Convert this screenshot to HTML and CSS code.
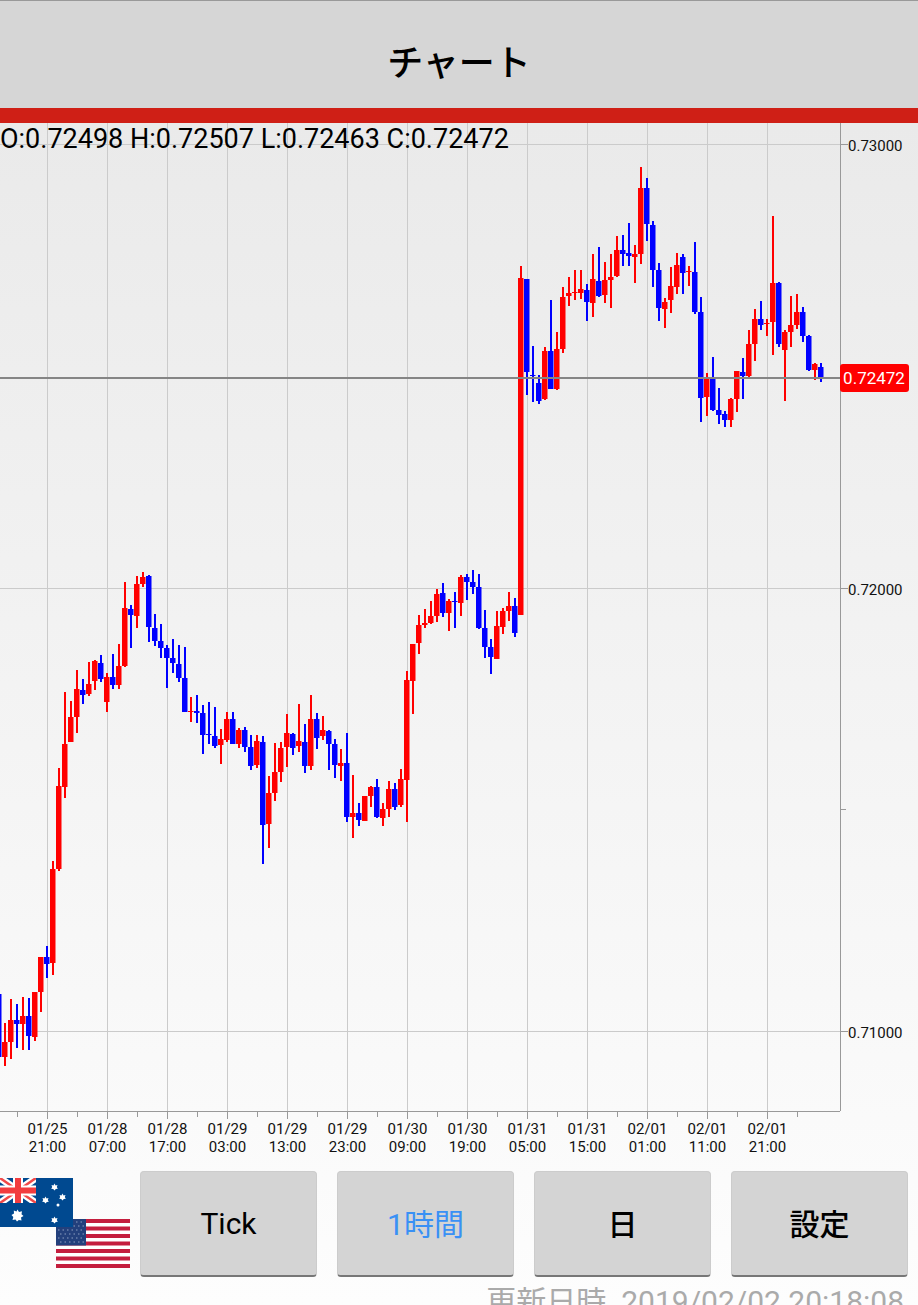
FILE: index.html
```html
<!DOCTYPE html>
<html lang="ja">
<head>
    <meta charset="UTF-8">
    <meta name="viewport" content="width=device-width, initial-scale=1.0">
    <title>チャート</title>
    <link rel="stylesheet" href="styles.css">
</head>
<body>
    <header class="header">
        <h1 class="title">チャート</h1>
    </header>

    <main class="chart">
        <p class="ohlc">O:0.72498 H:0.72507 L:0.72463 C:0.72472</p>
        <svg id="plot" class="plot" viewBox="0 123 918 1037" role="img" aria-label="AUD/USD"></svg>
    </main>

    <nav class="toolbar">
        <svg class="flags" viewBox="0 0 130 90" role="img" aria-label="AUD/USD">
            <!-- USA -->
            <g transform="translate(56 41)">
                <rect width="74" height="49" fill="#fff"/>
                <path d="M0 2H74M0 9.5H74M0 17H74M0 24.5H74M0 32H74M0 39.5H74M0 47H74" stroke="#c41e3e" stroke-width="3.8"/>
                <rect width="30" height="26.5" fill="#23407c"/>
                <path d="M2 3H29M4 7H29M2 11H29M4 15H29M2 19H29M4 23H29" stroke="#8c9dc0" stroke-width="1.2" stroke-dasharray="1.5 3"/>
            </g>
            <!-- Australia -->
            <g>
                <rect width="73" height="49" fill="#004990"/>
                <svg width="36" height="25" viewBox="0 0 36 25">
                    <path d="M0 0L36 25M36 0L0 25" stroke="#fff" stroke-width="7"/>
                    <path d="M0 0L36 25M36 0L0 25" stroke="#f04848" stroke-width="2.5"/>
                    <path d="M18 0V25M0 12.5H36" stroke="#fff" stroke-width="10"/>
                    <path d="M18 0V25M0 12.5H36" stroke="#f23c3f" stroke-width="6"/>
                </svg>
                <g fill="#fff">
                    <path d="M17.500 31.500l1.500 2.500 3-.8-.5 3 2 1.800-2.500 1.500.5 3-2.700-.5-1.800 1.500-1.500-2-3 .5.800-3-1.800-2 2.500-1.500-.2-3 2.700 1z"/>
                    <path id="star" d="M54.500 5.500l1 2 2-.5-.7 2 1 1.700-2 .2-1.300 1.500-1.300-1.500-2-.2 1-1.700-.7-2 2 .5z"/>
                    <use href="#star" x="-9" y="13"/>
                    <use href="#star" x="8" y="10"/>
                    <use href="#star" y="33"/>
                    <circle cx="58" cy="27" r="1.500"/>
                </g>
            </g>
        </svg>
        <button type="button" class="btn">Tick</button>
        <button type="button" class="btn kanji active">1時間</button>
        <button type="button" class="btn kanji">日</button>
        <button type="button" class="btn kanji">設定</button>
    </nav>

    <footer class="updated">更新日時&nbsp; 2019/02/02 20:18:08</footer>

    <script src="chart.js"></script>
</body>
</html>
```

FILE: styles.css
```css
* {
    box-sizing: border-box;
}

body {
    margin: 0;
    height: 100vh;
    overflow: hidden;
    background: linear-gradient(#e8e8e8, #fdfdfd);
    color: #000;
    font-family: Roboto, "Noto Sans CJK JP", sans-serif;
}

.header {
    display: flex;
    align-items: center;
    justify-content: center;
    height: 123px;
    padding-top: 18px;
    background: #d6d6d6;
    border-top: 1px solid #999;
    border-bottom: 15px solid #cf1f16;
}

.title {
    margin: 0;
    font-size: 36px;
    font-weight: 500;
    line-height: 48px;
}

.chart {
    position: relative;
}

/* Quote line lies over the plot */
.ohlc {
    position: absolute;
    top: 0;
    left: 0;
    margin: 0;
    font-size: 27px;
    line-height: 32px;
    white-space: nowrap;
}

.plot {
    display: block;
    width: 100%;
    height: auto;
}

.grid {
    stroke: #cbcbcb;
}

.axis {
    stroke: #999;
}

.price-line {
    stroke: #858585;
    stroke-width: 2;
}

.up {
    fill: #f00;
}

.down {
    fill: #00f;
}

.label {
    fill: #111;
    font-size: 15px;
}

.time {
    text-anchor: middle;
}

.badge {
    fill: #f00;
}

.badge-text {
    fill: #fff;
    font-size: 17px;
    text-anchor: middle;
}

.toolbar {
    display: flex;
    gap: 20px;
    padding: 11px 10px 0 0;
}

.flags {
    flex: none;
    width: 130px;
    height: 90px;
    margin: 7px -10px 0 0;
}

.btn {
    flex: 1;
    height: 106px;
    padding: 0;
    border: 1px solid #ccc;
    border-bottom: 2px solid #777;
    border-radius: 4px;
    background: #d4d4d4;
    color: #000;
    font-family: inherit;
    font-size: 30px;
}

.btn.kanji {
    padding-bottom: 4px;
    font-weight: 500;
}

.btn.active {
    color: #3990f5;
    font-weight: 400;
}

.updated {
    padding: 5px 14px 0 0;
    color: #aaa;
    font-size: 30px;
    line-height: 40px;
    text-align: right;
    white-space: nowrap;
}
```

FILE: chart.js
```javascript
const svg = document.getElementById('plot');

const PLOT_TOP = 123;
const PLOT_BOTTOM = 1111;
const PLOT_RIGHT = 840;
const STEP = 6;

// One candle per hour: direction, high, body top, body bottom, low
const candles = `
D 994 994 1057 1057|U 1023 1042 1057 1066|U 999 1020 1042 1059|D 1004 1020 1024 1048
U 997 1016 1024 1050|D 998 1016 1036 1050|U 992 992 1037 1041|U 957 957 992 1012
D 946 957 964 978|U 861 869 963 975|U 768 786 869 871|U 692 744 787 798
U 701 717 742 742|U 670 689 717 733|D 679 690 695 704|U 662 684 694 696
U 660 661 681 690|D 655 663 679 682|U 673 677 702 712|D 654 677 685 689
U 644 666 685 689|U 582 608 666 667|D 605 609 615 648|U 576 584 616 628
U 572 577 584 587|D 575 576 627 642|D 614 628 641 646|D 624 641 648 658
D 645 648 658 688|D 639 658 663 673|D 645 664 678 682|D 647 678 712 712
U 697 711 712 722|D 695 711 713 723|D 705 713 735 754|D 702 734 735 744
D 707 736 746 748|U 729 739 745 764|U 712 719 740 742|D 712 719 744 744
U 728 730 744 748|D 727 730 747 752|D 735 747 766 770|U 735 741 765 768
D 736 742 825 864|U 776 793 824 848|U 743 772 793 801|U 742 748 772 782
U 714 733 747 767|D 733 734 748 755|U 704 741 746 752|D 724 742 766 773
U 695 719 766 770|D 713 719 738 749|U 716 730 736 740|D 730 731 744 770
D 739 744 765 778|U 749 763 766 781|D 733 763 817 822|U 775 813 817 838
D 803 813 820 826|U 796 796 821 821|U 786 787 796 807|D 779 787 817 818
U 803 809 818 826|U 781 789 809 817|D 783 789 807 810|U 769 779 805 807
U 671 680 780 822|U 644 644 681 714|U 615 625 643 654|U 609 623 625 628
U 601 616 623 624|U 589 594 616 622|D 583 593 613 617|U 599 601 613 631
D 592 601 602 628|U 575 577 603 616|D 574 577 582 600|D 570 582 587 594
D 574 587 628 629|D 610 628 647 658|D 639 647 657 674|U 611 626 659 659
U 608 611 627 634|U 592 606 611 621|D 598 606 633 637|U 266 278 615 615
D 279 279 372 395|D 346 375 376 402|D 375 383 401 404|U 347 351 399 400
D 300 351 389 389|U 332 349 389 390|U 287 297 349 353|U 277 293 296 306
U 270 292 293 300|U 270 289 293 299|D 284 290 302 321|U 254 279 303 317
D 247 281 296 297|U 262 280 295 303|U 254 277 280 308|U 236 250 276 277
D 235 250 254 266|D 223 253 256 266|U 245 254 257 283|U 167 188 254 264
D 178 188 224 241|D 221 225 270 287|D 263 270 308 321|U 298 302 309 328
U 267 286 300 313|U 253 265 287 294|D 254 257 273 294|U 266 271 272 286
D 242 272 312 314|D 297 312 398 422|U 373 379 397 416|D 357 379 410 411
D 388 410 415 424|D 411 414 420 427|U 398 399 420 427|U 371 371 399 412
D 358 372 376 399|U 330 344 376 377|U 309 319 344 361|D 301 319 325 330
U 319 323 324 336|U 216 283 322 355|D 282 283 344 347|U 330 332 350 401
U 296 325 332 347|U 294 312 325 329|D 307 312 336 342|D 335 336 370 371
U 363 364 370 380|D 363 367 377 382`.trim().split(/[|\n]/);

const times = [
    ['01/25', '21:00'], ['01/28', '07:00'], ['01/28', '17:00'], ['01/29', '03:00'],
    ['01/29', '13:00'], ['01/29', '23:00'], ['01/30', '09:00'], ['01/30', '19:00'],
    ['01/31', '05:00'], ['01/31', '15:00'], ['02/01', '01:00'], ['02/01', '11:00'],
    ['02/01', '21:00']
];

const prices = [['0.73000', 144.5], ['0.72000', 588.5], ['0.71000', 1031.5]];

function line(cls, x1, y1, x2, y2) {
    return `<line class="${cls}" x1="${x1}" y1="${y1}" x2="${x2}" y2="${y2}"/>`;
}

let out = '';

// Time grid, ticks and labels
times.forEach(([date, hour], i) => {
    const x = 47.5 + i * STEP * 10;
    out += line('grid', x, PLOT_TOP, x, PLOT_BOTTOM);
    out += line('axis', x, PLOT_BOTTOM, x, PLOT_BOTTOM + 8);
    out += `<text class="label time" x="${x}" y="1134">${date}</text>`;
    out += `<text class="label time" x="${x}" y="1152">${hour}</text>`;
});
for (let x = 17.5; x < PLOT_RIGHT; x += STEP * 10) {
    out += line('axis', x, PLOT_BOTTOM, x, PLOT_BOTTOM + 6);
}

// Price grid, ticks and labels
prices.forEach(([price, y]) => {
    out += line('grid', 0, y, PLOT_RIGHT, y);
    out += line('axis', PLOT_RIGHT, y, PLOT_RIGHT + 8, y);
    out += `<text class="label" x="848" y="${y + 6}">${price}</text>`;
});
out += line('axis', PLOT_RIGHT, 809.5, PLOT_RIGHT + 6, 809.5);
out += line('axis', PLOT_RIGHT + 0.5, PLOT_TOP, PLOT_RIGHT + 0.5, PLOT_BOTTOM);
out += line('axis', 0, PLOT_BOTTOM + 0.5, PLOT_RIGHT, PLOT_BOTTOM + 0.5);

// Candles
candles.forEach((row, i) => {
    const [dir, ...values] = row.split(' ');
    const [high, top, bottom, low] = values.map(Number);
    const x = i * STEP - 2;
    const cls = dir === 'U' ? 'up' : 'down';
    out += `<rect class="${cls}" x="${x}" y="${high}" width="2" height="${low - high}"/>`;
    out += `<rect class="${cls}" x="${x - 2}" y="${top}" width="5.5" height="${bottom - top}"/>`;
});

// Current price
out += line('price-line', 0, 378, PLOT_RIGHT, 378);
out += '<rect class="badge" x="840" y="364" width="69" height="28" rx="3"/>';
out += '<text class="badge-text" x="874" y="384">0.72472</text>';

svg.innerHTML = out;
```
